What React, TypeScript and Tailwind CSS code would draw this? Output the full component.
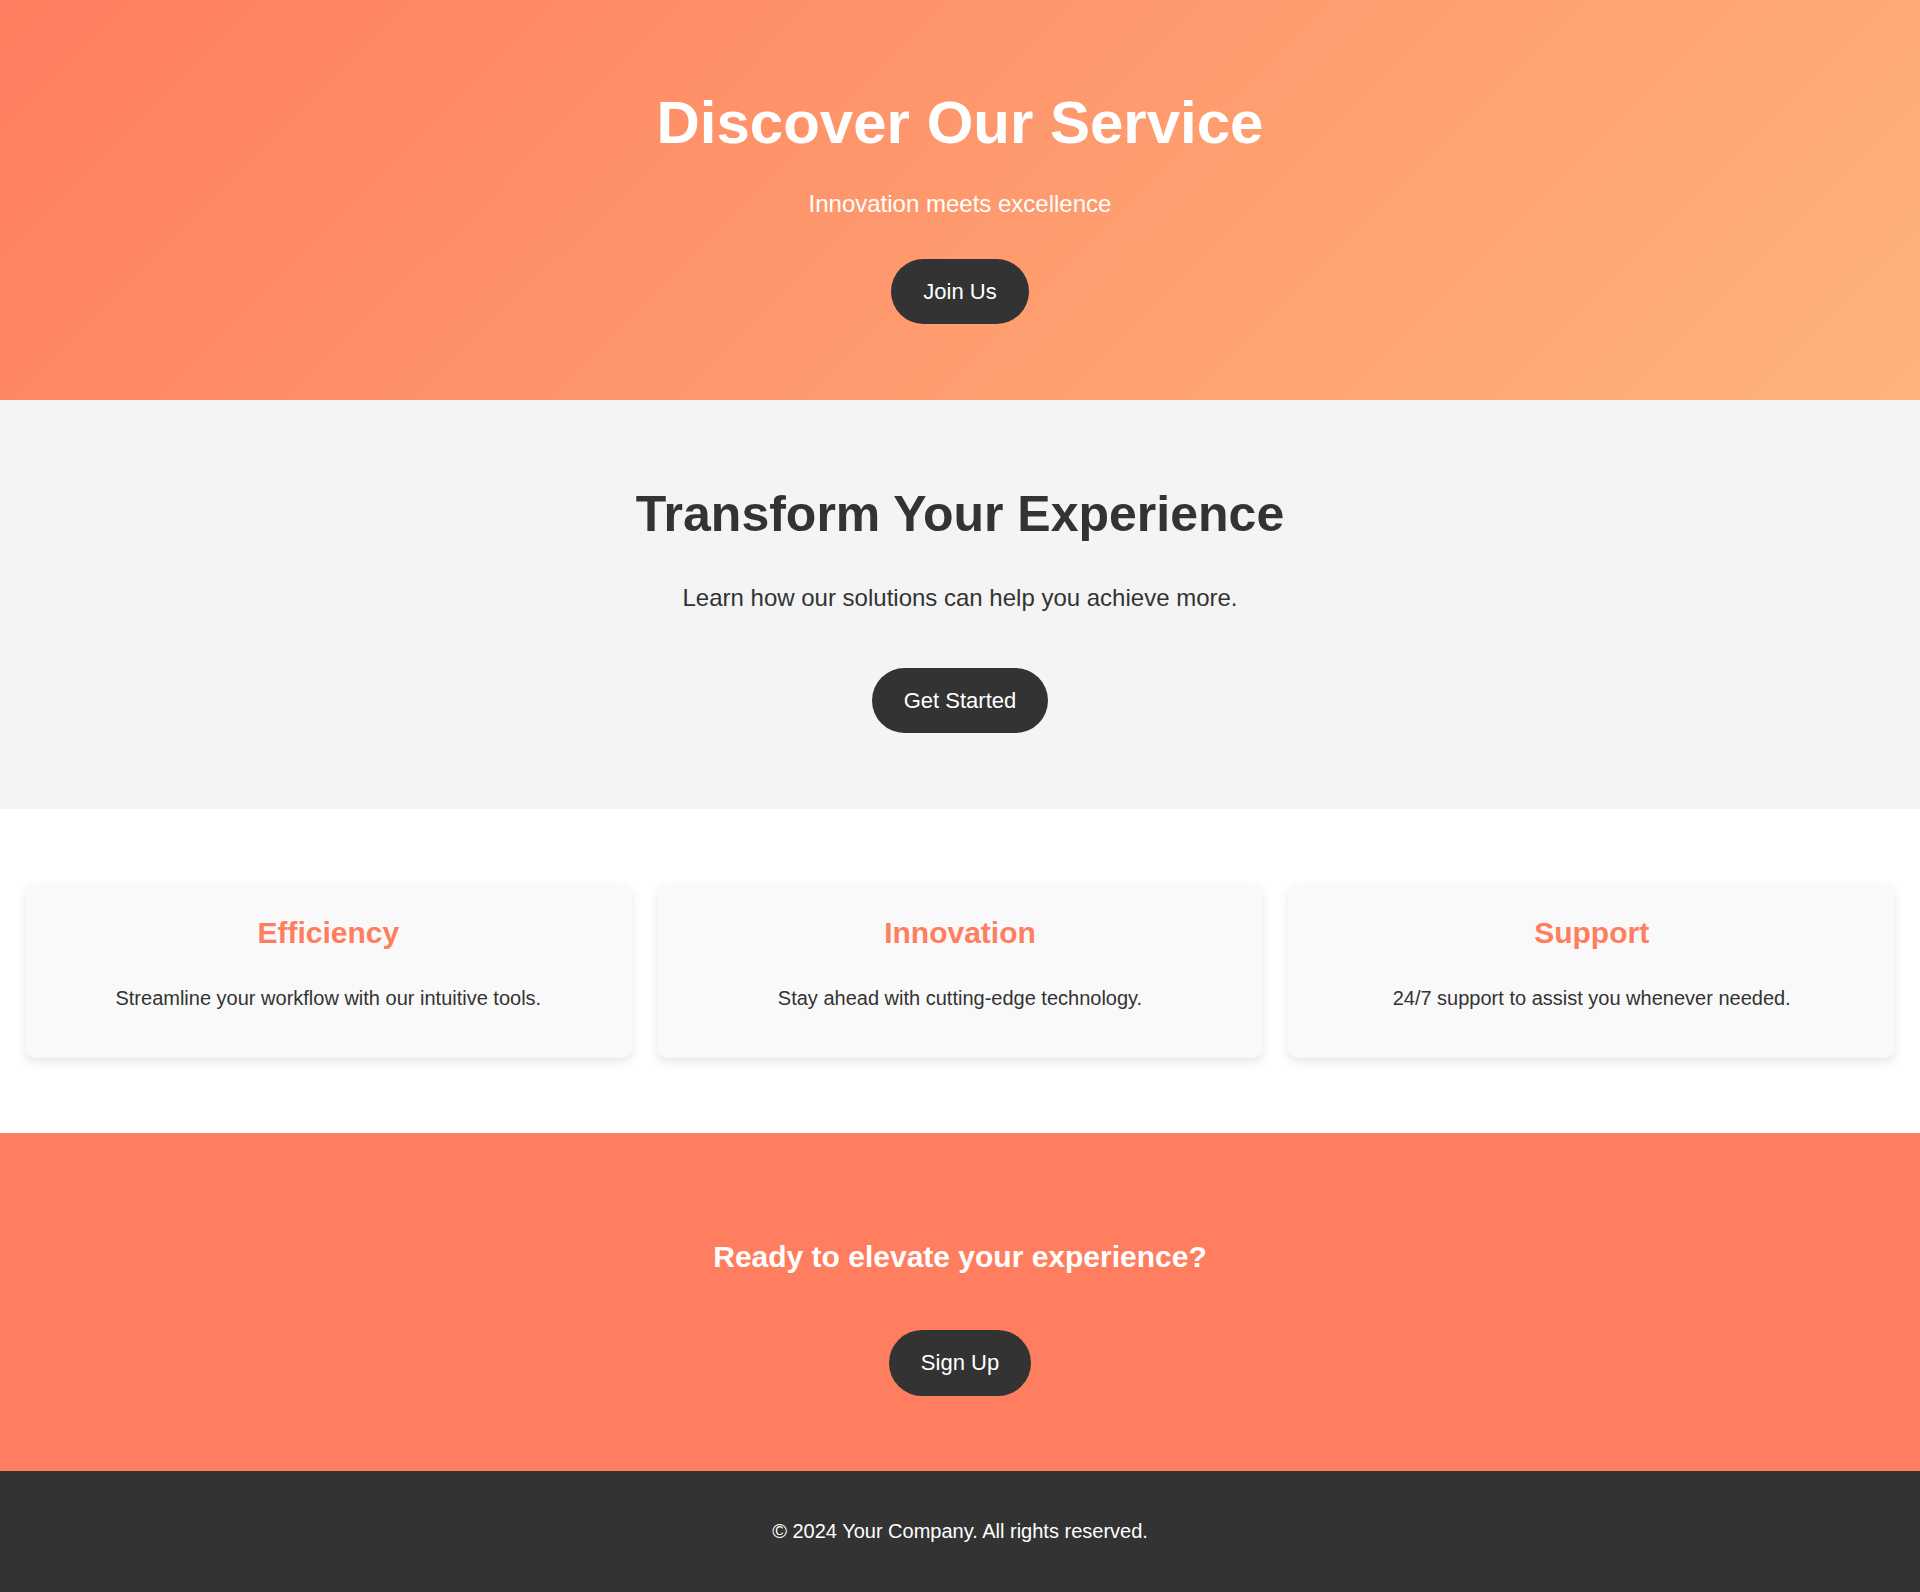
export default function App() {
    return (
        <div className="font-['Liberation_Sans',Arial,sans-serif] text-[#333]">
            <header className="bg-[linear-gradient(135deg,#ff7e5f,#feb47b)] text-white text-center pt-[88px] pb-[76px]">
                <h1 className="text-[60px] leading-[1.15] font-bold mb-[33px]">Discover Our Service</h1>
                <p className="text-[24px] leading-[1.15] mb-[41px]">Innovation meets excellence</p>
                <button className="bg-[#333] text-white text-[22px] leading-[1.15] px-8 py-5 rounded-full">Join Us</button>
            </header>

            <section className="bg-[#f4f4f4] text-center pt-[86px] pb-[76px]">
                <h2 className="text-[50px] leading-[1.15] font-bold mb-[41px]">Transform Your Experience</h2>
                <p className="text-[24px] leading-[1.15] mb-[56px]">Learn how our solutions can help you achieve more.</p>
                <button className="bg-[#333] text-white text-[22px] leading-[1.15] px-8 py-5 rounded-full">Get Started</button>
            </section>

            <section className="bg-white px-[25px] pt-[75px] pb-[75px]">
                <div className="grid grid-cols-3 gap-[25px]">
                    <Feature title="Efficiency" text="Streamline your workflow with our intuitive tools." />
                    <Feature title="Innovation" text="Stay ahead with cutting-edge technology." />
                    <Feature title="Support" text="24/7 support to assist you whenever needed." />
                </div>
            </section>

            <section className="bg-[#ff7e5f] text-white text-center pt-[107px] pb-[75px]">
                <h2 className="text-[30px] leading-[1.15] font-bold mb-[56px]">Ready to elevate your experience?</h2>
                <button className="bg-[#333] text-white text-[22px] leading-[1.15] px-8 py-5 rounded-full">Sign Up</button>
            </section>

            <footer className="bg-[#333] text-white text-center text-[20px] leading-[1.15] py-[49px]">
                © 2024 Your Company. All rights reserved.
            </footer>
        </div>
    );
}

function Feature({ title, text }: { title: string; text: string }) {
    return (
        <div className="bg-[#f9f9f9] rounded-[10px] shadow-[0_4px_10px_rgba(0,0,0,0.1)] text-center pt-[32px] pb-[48px]">
            <h3 className="text-[#ff7e5f] text-[30px] leading-[1.15] font-bold mb-[36px]">{title}</h3>
            <p className="text-[20px] leading-[1.15]">{text}</p>
        </div>
    );
}
